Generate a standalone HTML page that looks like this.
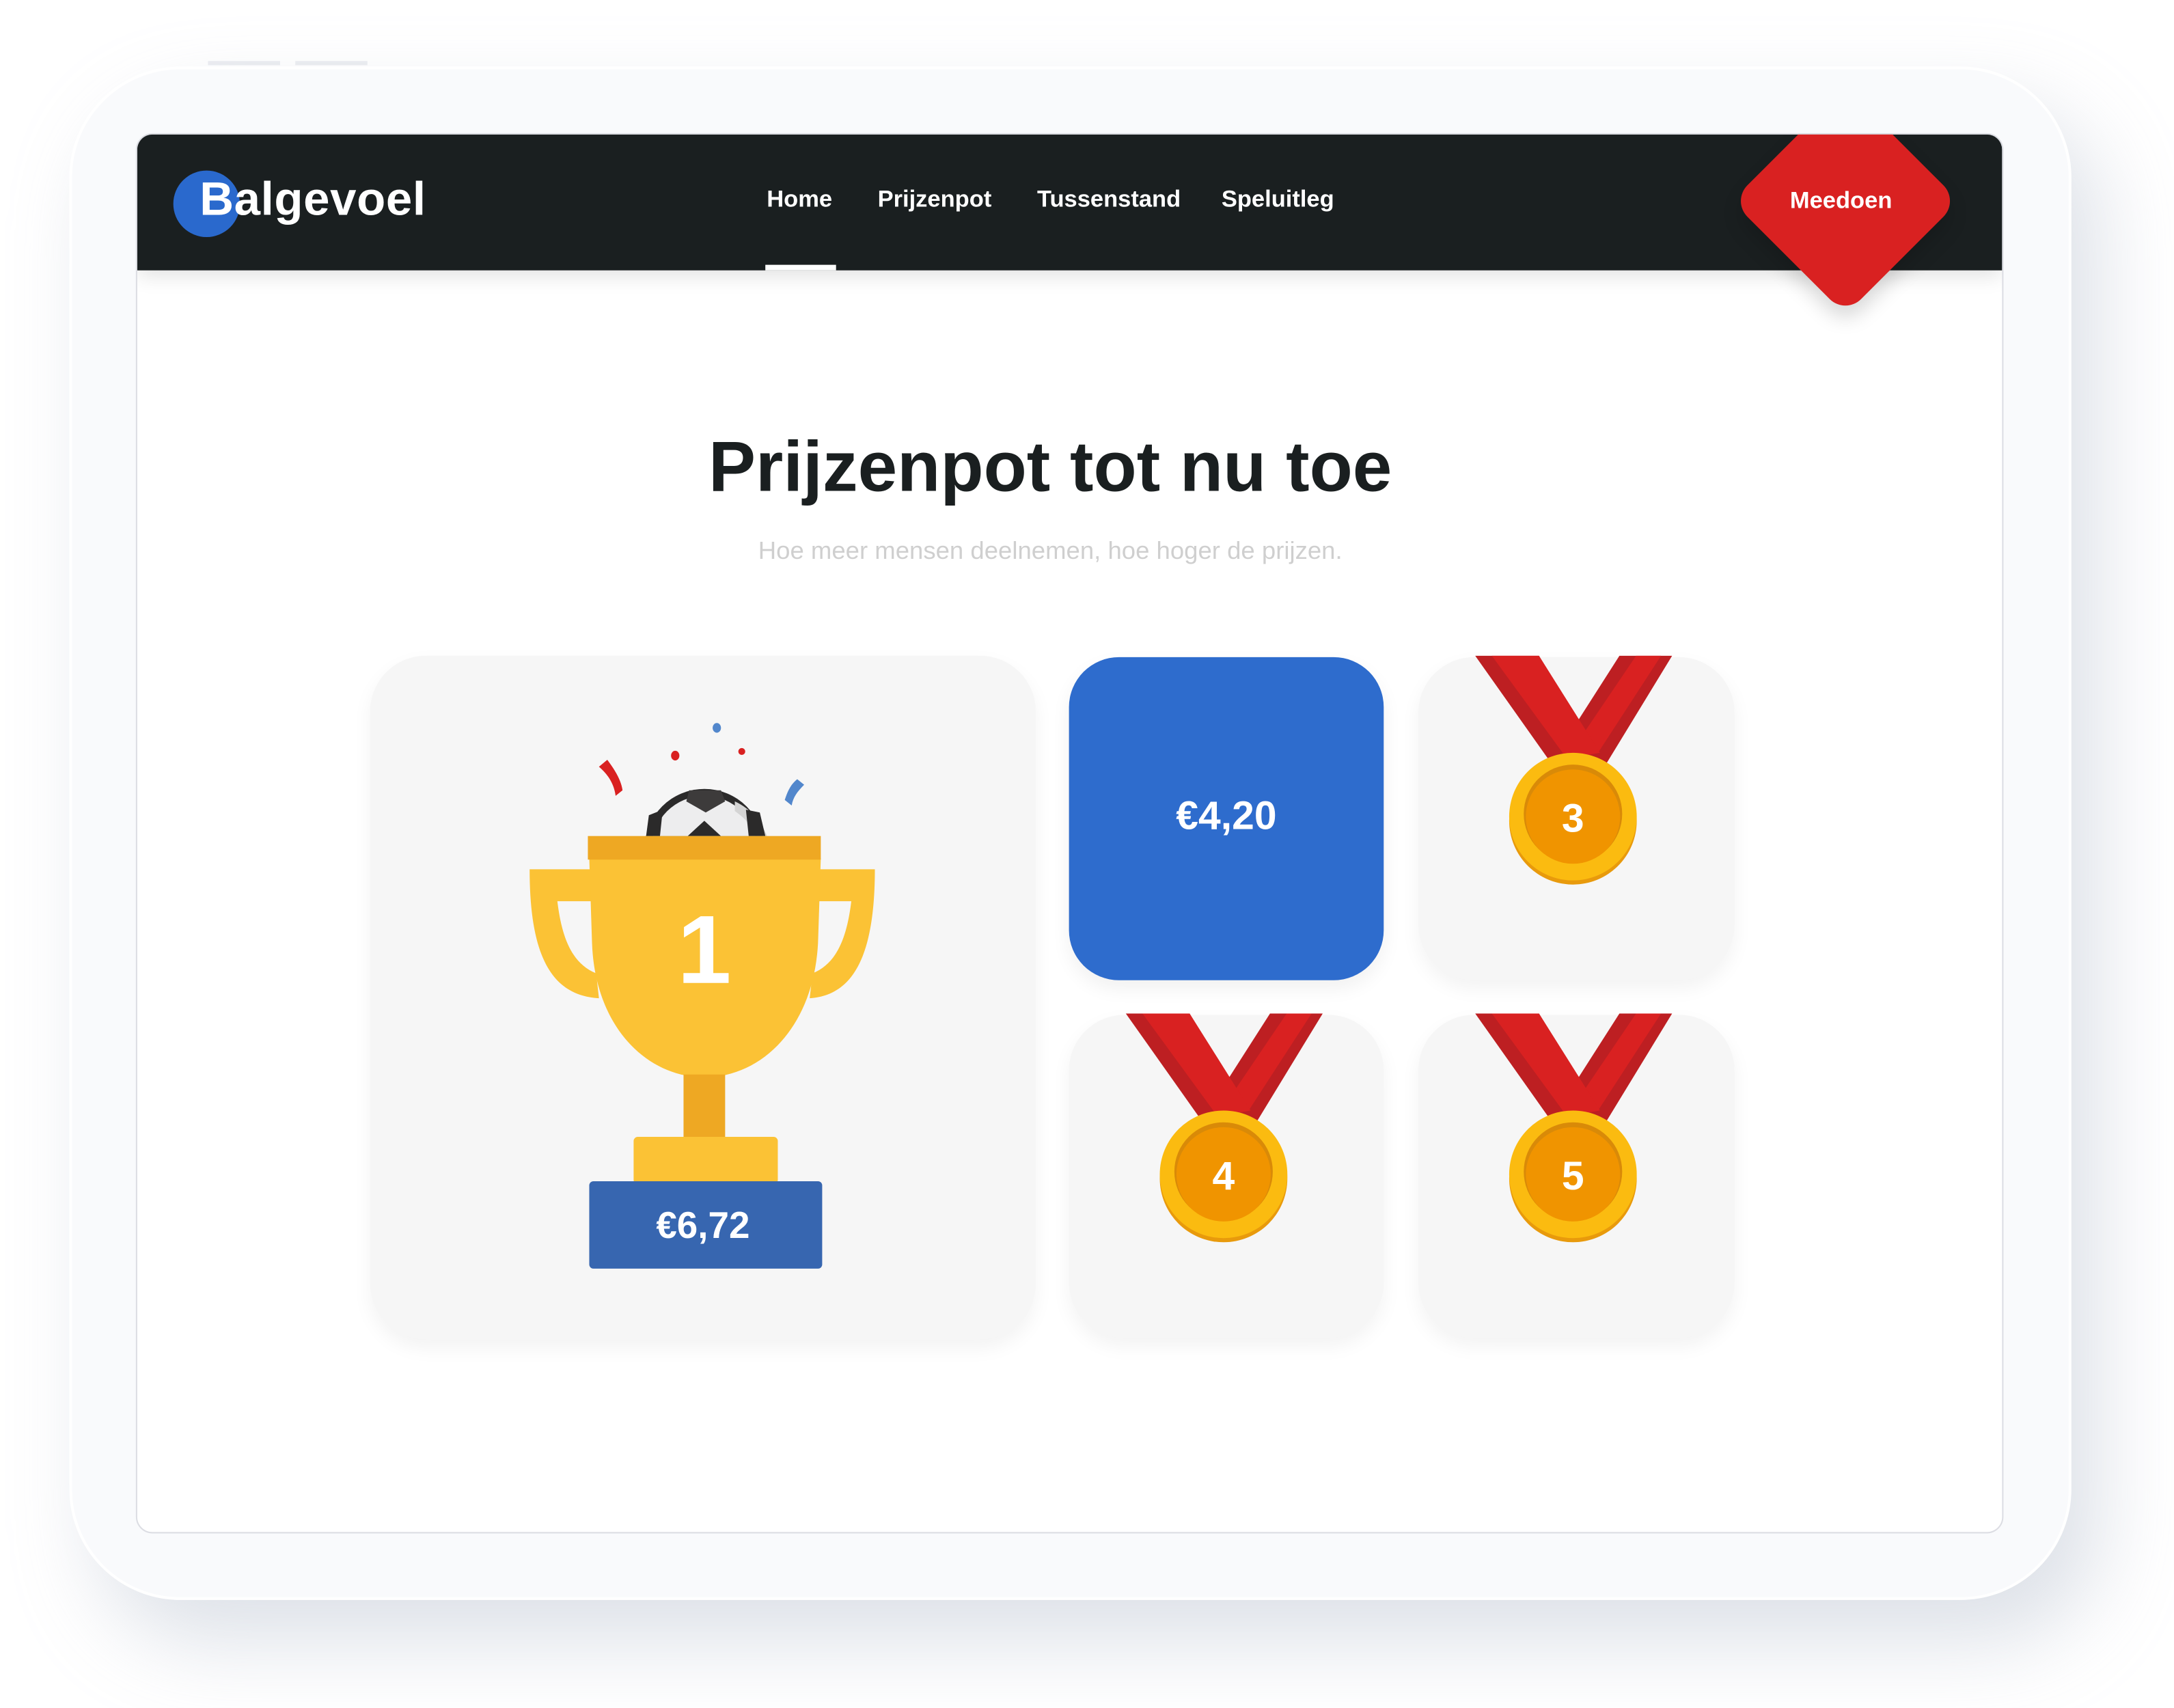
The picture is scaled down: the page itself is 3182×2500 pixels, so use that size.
<!DOCTYPE html>
<html><head><meta charset="utf-8"><style>
*{margin:0;padding:0;box-sizing:border-box}
html,body{width:3182px;height:2500px;overflow:hidden;background:#fff}
#s{position:absolute;left:0;top:0;width:1568px;height:1232px;transform:scale(2.02934);transform-origin:0 0;font-family:"Liberation Sans",sans-serif}
.a{position:absolute}
.frame{left:50px;top:48px;width:1444px;height:1106px;border-radius:80px;background:#f9fafc;border:2px solid #fff;box-shadow:20px 30px 60px rgba(180,188,205,.45)}
.screen{left:98px;top:96px;width:1347px;height:1010px;background:#fff;border:1px solid #dcdde3;border-radius:12px;overflow:hidden}
.nav{left:0;top:0;width:100%;height:98px;background:#1a1f20;box-shadow:0 4px 14px rgba(0,0,0,.12)}
.nl{color:#fff;font-weight:700;font-size:17px;top:37px}
.card{background:#f6f6f6;border-radius:40px;box-shadow:0 6px 14px rgba(0,0,0,.05);overflow:hidden}
</style></head><body><div id="s">
<div class="a" style="left:150px;top:44px;width:52px;height:3px;background:#eceef2"></div>
<div class="a" style="left:213px;top:44px;width:52px;height:3px;background:#eceef2"></div>
<div class="a frame"></div>
<div class="a screen">
 <div class="a nav">
  <div class="a" style="left:26px;top:26px;width:48px;height:48px;border-radius:50%;background:#2a69cd"></div>
  <div class="a" style="left:45px;top:28px;color:#fff;font-weight:700;font-size:34px;letter-spacing:0.3px">Balgevoel</div>
  <div class="a nl" style="left:454px">Home</div>
  <div class="a nl" style="left:534px">Prijzenpot</div>
  <div class="a nl" style="left:649px">Tussenstand</div>
  <div class="a nl" style="left:782px">Speluitleg</div>
  <div class="a" style="left:453px;top:94px;width:51px;height:4px;background:#fff"></div>
 </div>
 <div class="a" style="left:1174px;top:-10px;width:116px;height:116px;transform:rotate(45deg);background:#d92121;border-radius:16px;box-shadow:6px 6px 14px rgba(0,0,0,.15)"></div>
 <div class="a" style="left:1192px;top:38px;color:#fff;font-weight:700;font-size:17px">Meedoen</div>
 <div class="a" style="left:0;top:210px;width:100%;text-align:center;font-weight:700;font-size:51px;color:#1a1f20;padding-right:28px">Prijzenpot tot nu toe</div>
 <div class="a" style="left:0;top:290px;width:100%;text-align:center;font-size:18px;color:#cfcfcf;padding-right:28px">Hoe meer mensen deelnemen, hoe hoger de prijzen.</div>

 <div class="a card" style="left:168px;top:376px;width:480px;height:493px"></div>
 <div class="a" style="left:672px;top:377px;width:227px;height:233px;background:#2e6ccd;border-radius:36px;box-shadow:0 6px 14px rgba(0,0,0,.06)"></div>
 <div class="a" style="left:672px;top:476px;width:227px;text-align:center;color:#fff;font-weight:700;font-size:29px">€4,20</div>
 <div class="a card" style="left:924px;top:377px;width:228px;height:233px"></div>
 <div class="a card" style="left:672px;top:635px;width:227px;height:233px"></div>
 <div class="a card" style="left:924px;top:635px;width:228px;height:233px"></div>
</div>

<svg class="a" style="left:0;top:0" width="1568" height="1232" viewBox="0 0 1568 1232">
 <defs>
  <clipPath id="ball"><rect x="400" y="540" width="220" height="63"/></clipPath>
  <g id="medal">
   <polygon points="184,0 146,0 100,72 134,82" fill="#bd1f22"/>
   <polygon points="176,0 158,0 112,68 128,74" fill="#d92121"/>
   <polygon points="42,0 88,0 136,78 100,82" fill="#bd1f22"/>
   <polygon points="54,0 88,0 132,70 108,74" fill="#d92121"/>
   <circle cx="112.5" cy="119" r="46" fill="#e89a0c"/>
   <circle cx="112.5" cy="116" r="46" fill="#fbbb10"/>
   <circle cx="112.5" cy="114" r="35.5" fill="#d98a08"/>
   <circle cx="112.5" cy="116" r="34" fill="#f09400"/>
  </g>
 </defs>
 <path d="M432,553 L438,548 C444,556 448,563 449,570 L444,574 C443,566 439,559 432,553Z" fill="#d92121"/>
 <path d="M575,562 L580,566 C575,571 572,575 571,581 L566,577 C568,571 570,566 575,562Z" fill="#5287cc"/>
 <ellipse cx="487" cy="545" rx="3" ry="3.5" fill="#d92121"/>
 <ellipse cx="517" cy="525" rx="3" ry="3.5" fill="#5287cc"/>
 <circle cx="535" cy="542" r="2.5" fill="#d92121"/>
 <g clip-path="url(#ball)">
  <circle cx="508" cy="612" r="43" fill="#2b2a2a"/>
  <circle cx="508" cy="612" r="38" fill="#ededee"/>
  <path d="M530,585 C540,592 546,600 548,612 L556,612 C553,598 545,585 530,578Z" fill="#d4d4d4"/>
  <polygon points="497,570 520,570 523,578 509,586 495,578" fill="#3d3b3b"/>
  <polygon points="496,603 508,592 520,603" fill="#2b2a2a"/>
  <polygon points="538,584 548,586 552,603 540,603" fill="#2b2a2a"/>
  <polygon points="478,584 468,588 466,603 476,603" fill="#2b2a2a"/>
 </g>
 <path d="M426,627 H382 C382,690 398,718 432,720 L430,702 C412,695 405,675 402,650 H427Z" fill="#fbc235"/>
 <path d="M590,627 H631 C631,690 615,718 584,720 L586,702 C604,695 611,675 614,650 H589Z" fill="#fbc235"/>
 <path d="M425,619 H592 L590,680 C587,740 550,777 508,777 C466,777 429,740 427,680Z" fill="#fbc235"/>
 <rect x="424" y="603" width="168" height="17" fill="#eea823"/>
 <rect x="493" y="775" width="30" height="47" fill="#eea823"/>
 <rect x="457" y="820" width="104" height="34" rx="3" fill="#fbc235"/>
 <rect x="425" y="852" width="168" height="63" rx="3" fill="#3766b0"/>
 <text x="508" y="709" text-anchor="middle" font-family="Liberation Sans,sans-serif" font-weight="700" font-size="70" fill="#fff">1</text>
 <text x="507" y="893" text-anchor="middle" font-family="Liberation Sans,sans-serif" font-weight="700" font-size="27" fill="#fff">€6,72</text>
 <g transform="translate(1022,473)"><use href="#medal"/><text x="112.5" y="127" text-anchor="middle" font-family="Liberation Sans,sans-serif" font-weight="700" font-size="29" fill="#fff">3</text></g>
 <g transform="translate(770,731)"><use href="#medal"/><text x="112.5" y="127" text-anchor="middle" font-family="Liberation Sans,sans-serif" font-weight="700" font-size="29" fill="#fff">4</text></g>
 <g transform="translate(1022,731)"><use href="#medal"/><text x="112.5" y="127" text-anchor="middle" font-family="Liberation Sans,sans-serif" font-weight="700" font-size="29" fill="#fff">5</text></g>
</svg>
</div></body></html>
